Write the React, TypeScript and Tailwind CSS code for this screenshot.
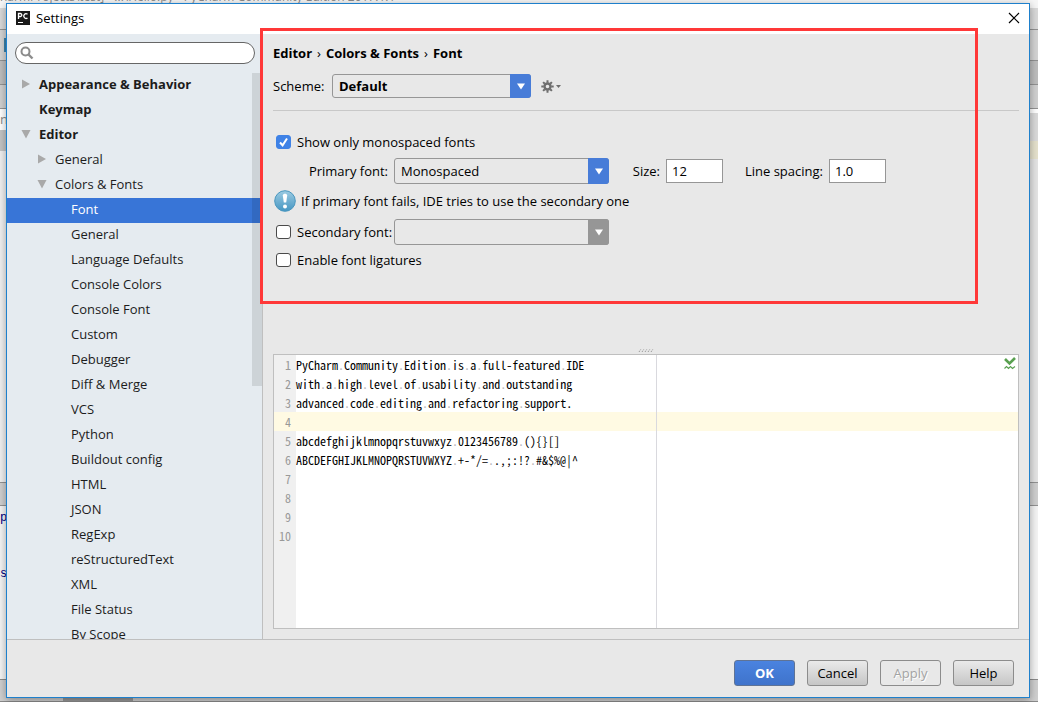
import { useState } from 'react'
import clsx from 'clsx'

interface TreeItem {
  label: string
  level: 0 | 1 | 2
  state?: 'open' | 'closed'
}

const tree: TreeItem[] = [
  { label: 'Appearance & Behavior', level: 0, state: 'closed' },
  { label: 'Keymap', level: 0 },
  { label: 'Editor', level: 0, state: 'open' },
  { label: 'General', level: 1, state: 'closed' },
  { label: 'Colors & Fonts', level: 1, state: 'open' },
  { label: 'Font', level: 2 },
  { label: 'General', level: 2 },
  { label: 'Language Defaults', level: 2 },
  { label: 'Console Colors', level: 2 },
  { label: 'Console Font', level: 2 },
  { label: 'Custom', level: 2 },
  { label: 'Debugger', level: 2 },
  { label: 'Diff & Merge', level: 2 },
  { label: 'VCS', level: 2 },
  { label: 'Python', level: 2 },
  { label: 'Buildout config', level: 2 },
  { label: 'HTML', level: 2 },
  { label: 'JSON', level: 2 },
  { label: 'RegExp', level: 2 },
  { label: 'reStructuredText', level: 2 },
  { label: 'XML', level: 2 },
  { label: 'File Status', level: 2 },
  { label: 'By Scope', level: 2 },
]

const previewLines = [
  'PyCharm Community Edition is a full-featured IDE',
  'with a high level of usability and outstanding',
  'advanced code editing and refactoring support.',
  '',
  'abcdefghijklmnopqrstuvwxyz 0123456789 (){}[]',
  'ABCDEFGHIJKLMNOPQRSTUVWXYZ +-*/= .,;:!? #&$%@|^',
  '',
  '',
  '',
  '',
]

function Arrow({ open }: { open: boolean }) {
  return (
    <svg width="10" height="10" viewBox="0 0 10 10" fill="#a9a9a9">
      {open ? <path d="M0.5 1h9L5 9.5z" /> : <path d="M1 0.5v9L9 5z" />}
    </svg>
  )
}

function Sidebar() {
  const [selected, setSelected] = useState(5)

  return (
    <aside className="flex w-64 shrink-0 flex-col border-r border-[#bfbfbf] bg-[#e5ebf0]">
      <label className="mx-2 mt-2 mr-[7px] flex h-[22px] shrink-0 items-center rounded-full border border-[#666] bg-white pl-1">
        <svg width="14" height="14" viewBox="0 0 14 14" fill="none" stroke="#8c8c8c">
          <circle cx="5.5" cy="5.5" r="4" strokeWidth="2" />
          <path d="M8.5 8.5l4 4" strokeWidth="2.4" />
        </svg>
        <input type="text" aria-label="Search settings" className="min-w-0 flex-1 bg-transparent px-1 outline-none" />
      </label>

      <div className="relative mt-[9px] min-h-0 flex-1 overflow-hidden">
        <ul>
          {tree.map((item, i) => (
            <li key={i}>
              <button
                onClick={() => setSelected(i)}
                className={clsx(
                  'flex h-[25px] w-full items-center pb-[3px] text-left text-[#1c1c1c]',
                  item.level === 0 && 'pl-[14px] font-bold',
                  item.level === 1 && 'pl-[30px]',
                  item.level === 2 && 'pl-[46px]',
                  i === selected && 'bg-[#3875d7] text-white'
                )}
              >
                <span className="w-[18px] shrink-0">
                  {item.state && <Arrow open={item.state === 'open'} />}
                </span>
                {item.label}
              </button>
            </li>
          ))}
        </ul>
        {/* scrollbar thumb */}
        <div className="pointer-events-none absolute top-0 right-0 h-[313px] w-[10px] bg-black/10" />
      </div>
    </aside>
  )
}

interface ComboProps {
  id: string
  value?: string
  disabled?: boolean
  className: string
}

function Combo({ id, value, disabled, className }: ComboProps) {
  return (
    <div className={clsx('relative', className)}>
      <select
        id={id}
        disabled={disabled}
        className="h-full w-full appearance-none rounded-[3px] border border-[#969696] bg-[#e8e8e8] pl-[6px] text-black outline-none"
      >
        {value ? <option>{value}</option> : <option aria-label="None"></option>}
      </select>
      <span
        className={clsx(
          'pointer-events-none absolute inset-y-0 right-0 flex w-[21px] items-center justify-center rounded-r-[3px]',
          disabled ? 'bg-[#969696]' : 'bg-[#477cd8]'
        )}
      >
        <svg width="8" height="7" viewBox="0 0 8 7" fill="#fff">
          <path d="M0 0.5h8L4 6.5z" />
        </svg>
      </span>
    </div>
  )
}

function Check({ id, label, defaultChecked }: { id: string; label: string; defaultChecked?: boolean }) {
  const [checked, setChecked] = useState(!!defaultChecked)
  return (
    <label htmlFor={id} className="flex items-center gap-[6px] pl-[3px]">
      <span className="grid">
        <input
          id={id}
          type="checkbox"
          checked={checked}
          onChange={(e) => setChecked(e.target.checked)}
          className="col-start-1 row-start-1 h-[14px] w-[15px] appearance-none rounded-[3px] border border-[#4a4a4a] bg-white checked:border-[#3f82e6] checked:bg-[#3f82e6]"
        />
        {checked && (
          <svg className="pointer-events-none col-start-1 row-start-1" width="15" height="14" viewBox="0 0 15 14" fill="none" stroke="#fff" strokeWidth="2">
            <path d="M4 7.5l2.6 2.8L11 3.5" />
          </svg>
        )}
      </span>
      {label}
    </label>
  )
}

function FontForm() {
  return (
    <form className="flex flex-col" onSubmit={(e) => e.preventDefault()}>
      <nav className="flex h-5 items-center gap-[5px] font-bold">
        <a href="#editor">Editor</a>
        <span className="font-normal">›</span>
        <a href="#colors-fonts">Colors &amp; Fonts</a>
        <span className="font-normal">›</span>
        <a href="#font">Font</a>
      </nav>

      <div className="mt-[11px] flex items-center border-b border-[#c8c8c8] pb-3">
        <label htmlFor="scheme" className="w-[59px]">Scheme:</label>
        <Combo id="scheme" value="Default" className="h-6 w-[199px] font-bold" />
        <button aria-label="Scheme actions" className="ml-[10px] flex items-center gap-[2px]">
          <svg width="13" height="13" viewBox="0 0 13 13" fill="none" stroke="#6e6e6e">
            <circle cx="6.5" cy="6.5" r="3" strokeWidth="2.4" />
            <path d="M6.5 0.3v2.4M6.5 10.3v2.4M0.3 6.5h2.4M10.3 6.5h2.4M2.1 2.1l1.7 1.7M9.2 9.2l1.7 1.7M2.1 10.9l1.7-1.7M9.2 3.8l1.7-1.7" strokeWidth="2" />
          </svg>
          <svg width="5" height="3" viewBox="0 0 5 3" fill="#6e6e6e">
            <path d="M0 0h5L2.5 3z" />
          </svg>
        </button>
      </div>

      <div className="mt-[21px] flex h-5 items-center">
        <Check id="mono-only" label="Show only monospaced fonts" defaultChecked />
      </div>

      <div className="mt-[6px] flex items-center">
        <label htmlFor="primary" className="w-[121px] pr-[6px] text-right">Primary font:</label>
        <Combo id="primary" value="Monospaced" className="h-[26px] w-[215px]" />
        <label htmlFor="size" className="w-[57px] pr-[6px] text-right">Size:</label>
        <input id="size" defaultValue="12" className="h-6 w-[57px] border border-[#969696] bg-white px-[5px] outline-none" />
        <label htmlFor="spacing" className="w-[106px] pr-[6px] text-right">Line spacing:</label>
        <input id="spacing" defaultValue="1.0" className="h-6 w-[57px] border border-[#969696] bg-white px-[5px] outline-none" />
      </div>

      <p className="mt-[6px] flex items-center gap-[5px] pl-px">
        <svg width="22" height="22" viewBox="0 0 22 22">
          <defs>
            <linearGradient id="info" x1="0" y1="0" x2="0" y2="1">
              <stop offset="0" stopColor="#9ccbe2" />
              <stop offset="1" stopColor="#4596c2" />
            </linearGradient>
          </defs>
          <circle cx="11" cy="11" r="10.3" fill="url(#info)" stroke="#4a97bf" />
          <path d="M8.8 5.6c0-2.4 4.4-2.4 4.4 0l-1 7h-2.4z" fill="#fff" />
          <circle cx="11" cy="16.4" r="2" fill="#fff" />
        </svg>
        If primary font fails, IDE tries to use the secondary one
      </p>

      <div className="mt-[7px] flex items-center">
        <div className="w-[121px]">
          <Check id="secondary-on" label="Secondary font:" />
        </div>
        <Combo id="secondary" disabled className="h-[26px] w-[215px]" />
      </div>

      <div className="mt-[5px] flex h-5 items-center">
        <Check id="ligatures" label="Enable font ligatures" />
      </div>
    </form>
  )
}

function Preview() {
  return (
    <div className="relative flex min-h-0 flex-1 flex-col border border-[#bfbfbf] bg-white">
      <ol className="flex flex-1 flex-col font-['Noto_Sans_CJK_SC',monospace] text-[12px] leading-[19px] [font-feature-settings:'hwid']">
        {previewLines.map((line, i) => (
          <li key={i} className={clsx('flex h-[19px]', i === 3 && 'bg-[#fffae3]')}>
            <span className={clsx('w-[22px] shrink-0 pr-[5px] text-right text-[#999]', i !== 3 && 'bg-[#f0f0f0]')}>
              {i + 1}
            </span>
            <code className="font-['Noto_Sans_CJK_SC',monospace] whitespace-pre text-black [font-feature-settings:'hwid']">
              {line.split(' ').map((word, j) => (
                <span key={j}>
                  {j > 0 && <span className="text-[#b8b8b8]">.</span>}
                  {word}
                </span>
              ))}
            </code>
          </li>
        ))}
        <li className="w-[22px] flex-1 bg-[#f0f0f0]" aria-hidden="true" />
      </ol>
      {/* right margin guide */}
      <div className="absolute inset-y-0 left-[382px] w-px bg-[#d9d9de]" />
      <svg className="absolute top-[2px] right-[2px]" width="12" height="13" viewBox="0 0 12 13" fill="none" stroke="#59a050">
        <path d="M1 2l4.5 4.5L11 1" strokeWidth="2.6" />
        <path d="M0.5 11.5l2-2 2 2 2-2 2 2 2.5-2" strokeWidth="1.1" />
      </svg>
    </div>
  )
}

// slices of the IDE window that stick out around the dialog
function Backdrop() {
  return (
    <div className="absolute inset-0 flex flex-col bg-[#f0f0f0]" aria-hidden="true">
      <div className="flex h-[3px] items-end overflow-hidden bg-[#f6f6f6] text-[12px] whitespace-pre text-[#8a8a8a]">
        <span className="leading-3">harmProjects\test] - ...\Hello.py - PyCharm Community Edition 2017.1.1</span>
      </div>
      <div className="h-[5px] bg-[#f6f6f6]" />
      <div className="h-[22px] border-b border-[#929292] bg-[#d9d9d9]" />
      <div className="flex h-[31px] items-center border-b border-[#929292] bg-[#d4d4d4]">
        <div className="ml-1 h-[14px] w-2 bg-[#3b83ad]" />
      </div>
      <div className="h-6 border-b border-[#929292] bg-[#bdbdbd]" />
      <div className="h-6 border-b border-[#929292] bg-[#d0d0d0]" />
      <div className="flex h-[21px] justify-between">
        <span className="w-4 bg-white text-[#8a8a8a]">n'</span>
        <div className="w-4 border-t-4 border-white bg-[#dadada]" />
      </div>
      <div className="flex h-[21px] justify-between">
        <div className="w-4 bg-[#c4c4c4]" />
        <div className="w-4 bg-gradient-to-b from-[#dadada] from-50% to-[#e5e1cc] to-50%" />
      </div>
      <div className="flex h-[331px] justify-end">
        <div className="w-4 border-t-8 border-[#e5e1cc] bg-[#e4e4e4]" />
      </div>
      <div className="h-6 border-y border-[#929292] bg-[#cfcfcf]" />
      <div className="flex flex-1 flex-col bg-[#f4f4f4] pt-[2px] font-['Liberation_Mono',monospace] text-[12px] text-[#000080]">
        <span>p</span>
        <span className="pt-9">s</span>
      </div>
      <div className="h-[23px] border-y border-[#8a8a8a] bg-[#cfcfcf] pl-[63px]">
        <div className="h-full w-[70px] bg-[#999]" />
      </div>
    </div>
  )
}

const buttonBase = 'h-[26px] w-[61px] rounded-[3px] border'

export default function App() {
  return (
    <div className="relative h-screen overflow-hidden pt-[3px] pr-2 pb-1 pl-[6px] font-['Open_Sans','Noto_Sans',sans-serif] text-[13px] leading-5 text-black">
      <Backdrop />

      <div role="dialog" aria-label="Settings" className="relative flex h-full flex-col border border-[#1e80cc] bg-[#e8e8e8] shadow-[0_2px_8px_rgba(0,0,0,0.35)]">
        <header className="flex h-[30px] shrink-0 items-center bg-white pr-[9px] pb-[2px] pl-[9px]">
          <svg width="14" height="14" viewBox="0 0 14 14">
            <rect width="14" height="14" fill="#1a1a1a" />
            <path d="M2.5 8V2.5h1.8a1.500 1.500 0 0 1 0 3H2.500M11.500 3.300a2.300 2.300 0 1 0 0 3.600" fill="none" stroke="#fff" strokeWidth="1.3" />
            <path d="M2 11.500h5" stroke="#fff" />
          </svg>
          <h1 className="ml-[6px] flex-1">Settings</h1>
          <button aria-label="Close">
            <svg width="12" height="12" viewBox="0 0 12 12" fill="none" stroke="#000" strokeWidth="1.2">
              <path d="M1 1l10 10M11 1L1 11" />
            </svg>
          </button>
        </header>

        <div className="flex min-h-0 flex-1 border-b border-[#bfbfbf]">
          <Sidebar />
          <main className="flex min-w-0 flex-1 flex-col px-[10px] pt-[9px] pb-[10px]">
            <FontForm />
            <div className="mt-auto flex justify-center pt-4 pb-px">
              <svg width="16" height="5" viewBox="0 0 16 5" stroke="#8c8c8c">
                <path d="M1 4l2-3M4 4l2-3M7 4l2-3M10 4l2-3M13 4l2-3" strokeDasharray="1 1" />
              </svg>
            </div>
            <div className="flex h-[275px] shrink-0 flex-col">
              <Preview />
            </div>
          </main>
        </div>

        <footer className="flex shrink-0 items-center justify-end gap-3 pt-5 pr-[15px] pb-[11px]">
          <button className={clsx(buttonBase, 'border-[#5f7395] bg-gradient-to-b from-[#4a83e0] to-[#3f73cb] font-bold text-white')}>OK</button>
          <button className={clsx(buttonBase, 'border-[#8c8c8c] bg-gradient-to-b from-[#eaeaea] to-[#c6c6c6]')}>Cancel</button>
          <button disabled className={clsx(buttonBase, 'border-[#8c8c8c] bg-[#e8e8e8] text-[#a3a3a3] [text-shadow:1px_1px_0_#fff]')}>Apply</button>
          <button className={clsx(buttonBase, 'border-[#8c8c8c] bg-gradient-to-b from-[#eaeaea] to-[#c6c6c6]')}>Help</button>
        </footer>

        {/* red highlight around the font settings */}
        <div className="pointer-events-none absolute top-[24px] right-[51px] left-[253px] h-[276px] border-[3px] border-[#ff3838]" />
      </div>
    </div>
  )
}
